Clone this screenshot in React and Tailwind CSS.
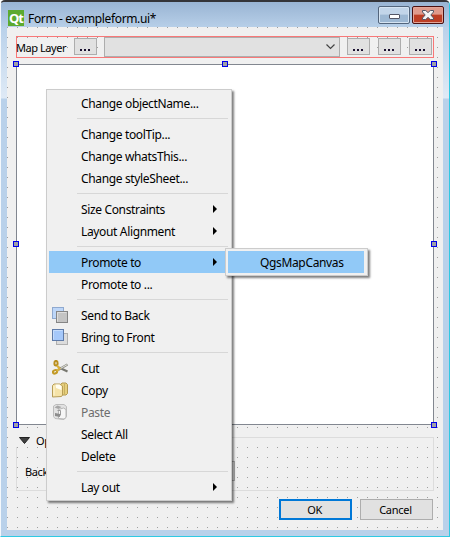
import React from "react";

function Txt({ children, ls = "tracking-[-0.35px]", className = "" }) {
  return <span className={`whitespace-pre ${ls} ${className}`}>{children}</span>;
}

function SendBackIcon() {
  return (
    <svg width="16" height="16" viewBox="0 0 16 16">
      <rect x="0.5" y="0.5" width="11" height="11" fill="#bdd6f8" stroke="#8fa9cf" />
      <rect x="4.5" y="4.5" width="11" height="11" fill="#c4c4c4" stroke="#858585" />
      <path d="M5.5 14.5v-9h9" fill="none" stroke="#dedede" />
    </svg>
  );
}

function BringFrontIcon() {
  return (
    <svg width="16" height="16" viewBox="0 0 16 16">
      <rect x="4.5" y="4.5" width="11" height="11" fill="#dcdcdc" stroke="#b0b0b0" />
      <rect x="0.5" y="0.5" width="11" height="11" fill="#a5c8fa" stroke="#5f7ba8" />
      <path d="M1.5 10.5v-9h9" fill="none" stroke="#c5dcfc" />
    </svg>
  );
}

function CutIcon() {
  return (
    <svg width="16" height="16" viewBox="0 0 16 16" fill="none">
      <path d="M7 7.500L15.500 11.500" stroke="#77776f" strokeWidth="2.200" />
      <path d="M6 10L15.500 4.500" stroke="#8f8f87" strokeWidth="2.400" />
      <path d="M8 8.700L15 4.700" stroke="#e0e0d8" strokeWidth="1" />
      <ellipse cx="4" cy="3.200" rx="1.600" ry="2.300" stroke="#b98e1d" strokeWidth="2" />
      <ellipse cx="3" cy="11.800" rx="2.200" ry="1.600" stroke="#c29a26" strokeWidth="2" transform="rotate(-25 3 11.800)" />
      <path d="M5 5.500L7.500 8.500L5 11" stroke="#d9b13b" strokeWidth="2" />
    </svg>
  );
}

function CopyIcon() {
  return (
    <svg width="16" height="16" viewBox="0 0 16 16">
      <path d="M8.500 2.500L10 1h4l1.500 1.500v9L14 13H8.500z" fill="#e6cf7d" stroke="#b39a51" />
      <path d="M12.500 2v10" stroke="#c9b060" />
      <path d="M0.500 3.500L2 2h6l2.500 2v9l-1 1.500-9 .5z" fill="#f5e3a8" stroke="#b79d57" />
      <path d="M3.500 2.500h4l2 2v3.500L4 6z" fill="#fffdf2" />
      <path d="M2 4v9.500" stroke="#fff7d6" />
    </svg>
  );
}

function PasteIcon() {
  return (
    <svg width="16" height="16" viewBox="0 0 16 16">
      <path d="M1.500 2L4 .5h8l2.500 2v10L12 15.500l-9-1-1.500-2z" fill="#e2e2e2" stroke="#bcbcbc" />
      <path d="M2.500 3.500l3-2 4 1.500-3 2z" fill="#a6a6a6" />
      <path d="M6.500 5.500l5-1.500 2.500 1.500v8l-2 1.500-5.500-.5z" fill="#f6f6f6" stroke="#b6b6b6" />
      <path d="M3 9l5 1v3L3 12z" fill="#8c8c8c" />
      <path d="M5.500 6.500h3v5" fill="none" stroke="#9a9a9a" />
    </svg>
  );
}

function Item({ label, icon, arrow, active, disabled }) {
  return (
    <div className={`flex h-[22px] items-center ${active ? "bg-[#91c9f7]" : ""}`}>
      <div className="flex w-8 shrink-0 pl-[3px]">{icon}</div>
      <Txt className={`grow pt-[2px] leading-[22px] ${disabled ? "text-[#6d6d6d]" : ""}`}>{label}</Txt>
      {arrow && (
        <svg className="mr-3 mb-px shrink-0" width="4" height="8" viewBox="0 0 4 8">
          <path d="M0 0L4 4L0 8z" fill="#000" />
        </svg>
      )}
    </div>
  );
}

function Sep() {
  return <div className="mr-px ml-7 h-[9px] pt-1"><div className="h-px bg-[#d7d7d7]" /></div>;
}

function ToolButton({ className = "" }) {
  return (
    <div className={`flex h-[17px] w-[23px] shrink-0 items-center justify-center gap-[2px] border border-[#adadad] bg-[#e1e1e1] pt-[7px] pr-px ${className}`}>
      <i className="h-[2px] w-[2px] bg-[#1a1030]" />
      <i className="h-[2px] w-[2px] bg-[#1a1030]" />
      <i className="h-[2px] w-[2px] bg-[#1a1030]" />
    </div>
  );
}

function Handle({ className }) {
  return <div className={`absolute size-[6px] border border-[#0000e8] bg-[#a0a0a4] ${className}`} />;
}

export default function App() {
  return (
    <div className="relative flex h-[537px] w-[450px] flex-col overflow-hidden rounded-t-[5px] border-t-2 border-r border-b border-l border-t-[#343438] border-r-[#2fc9e2] border-b-[#2fc9e2] border-l-[#f4f8fc] bg-[#b9d1ea] font-['Noto_Sans','Open_Sans',sans-serif] text-[12px] text-black">
      <div className="flex h-[25px] shrink-0 items-start bg-linear-to-b from-[#99b4d3] to-[#b7cfe8] pl-[7px]">
        <div className="mt-2 flex size-4 shrink-0 items-center justify-center bg-[#5caa2f] font-['Open_Sans','Noto_Sans',sans-serif] text-[13px] leading-4 font-bold tracking-[-1px] text-white">Qt</div>
        <Txt className="ml-1 pt-2 leading-[18px]">Form - exampleform.ui*</Txt>
        <div className="mt-1 ml-auto flex h-[18px] w-8 items-center justify-center rounded-[2px] border border-[#53657c] bg-linear-to-b from-[#c2d5e9] from-45% to-[#9db8d3] to-50% shadow-[inset_0_0_0_1px_#d6e4f2]">
          <div className="mt-[3px] h-[5px] w-[11px] rounded-[1px] border border-[#535666] bg-white" />
        </div>
        <div className="mt-1 mr-[5px] ml-[2px] flex h-[18px] w-8 items-center justify-center rounded-[2px] border border-[#4c1010] bg-linear-to-b from-[#df9a8c] from-45% to-[#bd3e25] to-50% shadow-[inset_0_0_0_1px_#e3a598]">
          <svg width="12" height="10" viewBox="0 0 12 10">
            <path d="M.5.5h3.200L6 2.600 8.300.5h3.200v1.500L8.800 5l2.700 3v1.500H8.300L6 7.400 3.700 9.500H.5V8l2.700-3L.5 2z" fill="#f4f4f4" stroke="#535666" />
          </svg>
        </div>
      </div>

      <div className="flex shrink-0 bg-[linear-gradient(#b9d1ea,#dfeaf6_71px,#b9d1ea_72px)] pr-[6px] pl-[6px]">
        <div className="flex h-[503px] w-[436px] flex-col bg-[#f0f0f0] bg-[radial-gradient(circle_at_0.5px_0.5px,#a0a0a0_0.7px,transparent_0.71px)] bg-size-[10px_10px] pt-[9px] pr-[9px] pl-[9px]">
          <div className="flex h-[22px] shrink-0 items-start border border-[#f87878]">
            <Txt ls="tracking-[-0.45px]" className="-ml-px w-[58px] pt-px text-[11px] leading-5">Map Layer</Txt>
            <ToolButton className="mt-px" />
            <div className="ml-[7px] flex h-5 w-[236px] items-center justify-end border border-[#adadad] bg-[#e1e1e1] pr-1">
              <svg width="9" height="6" viewBox="0 0 9 6"><path d="M.5.5l4 4 4-4" fill="none" stroke="#444" strokeWidth="1.200" /></svg>
            </div>
            <ToolButton className="mt-px ml-[7px]" />
            <ToolButton className="mt-px ml-2" />
            <ToolButton className="mt-px ml-2" />
          </div>

          <div className="relative mt-[6px] h-[361px] shrink-0 border border-[#828790] bg-white">
            <Handle className="-top-1 -left-1" />
            <Handle className="-top-1 left-[205px]" />
            <Handle className="-top-1 -right-1" />
            <Handle className="top-[176px] -left-1" />
            <Handle className="top-[176px] -right-1" />
            <Handle className="-bottom-1 -left-1" />
            <Handle className="-bottom-1 left-[205px]" />
            <Handle className="-bottom-1 -right-1" />
          </div>

          <div className="mt-3 h-[54px] shrink-0 border border-[#dcdcdc]">
            <div className="-mt-1 -ml-px flex h-[13px] w-[90px] items-center bg-[#f0f0f0] pl-[3px]">
              <svg width="11" height="7" viewBox="0 0 11 7"><path d="M.5.5h10l-5 6z" fill="#404040" stroke="#222" /></svg>
              <Txt ls="tracking-[-0.45px]" className="ml-[6px] text-[11px] leading-[13px]">Options</Txt>
            </div>
            <div className="mt-[14px] flex h-5 w-[218px] items-center justify-between pl-2">
              <Txt ls="tracking-[-0.35px]" className="pt-px text-[11px] leading-5">Background color</Txt>
              <div className="h-5 w-20 border border-[#adadad] bg-[#e1e1e1]" />
            </div>
          </div>

          <div className="mt-2 mr-px flex justify-end gap-2">
            <div className="flex h-[21px] w-[73px] items-center justify-center border-2 border-[#0078d7] bg-[#e1e1e1] pr-[2px]"><Txt ls="tracking-[-0.5px]" className="pt-px text-[11px]">OK</Txt></div>
            <div className="flex h-[21px] w-[73px] items-center justify-center border border-[#adadad] bg-[#e1e1e1] pr-[2px]"><Txt ls="tracking-[-0.25px]" className="pt-px text-[11px]">Cancel</Txt></div>
          </div>
        </div>
      </div>

      <div className="absolute top-[87px] left-[45px] h-[412px] w-[186px] border border-[#ccc] bg-[#f0f0f0] p-[2px] shadow-[2px_2px_2px_#00000080]">
        <Item label="Change objectName..." />
        <Sep />
        <Item label="Change toolTip..." />
        <Item label="Change whatsThis..." />
        <Item label="Change styleSheet..." />
        <Sep />
        <Item label="Size Constraints" arrow />
        <Item label="Layout Alignment" arrow />
        <Sep />
        <Item label="Promote to" arrow active />
        <Item label="Promote to ..." />
        <Sep />
        <Item label="Send to Back" icon={<SendBackIcon />} />
        <Item label="Bring to Front" icon={<BringFrontIcon />} />
        <Sep />
        <Item label="Cut" icon={<CutIcon />} />
        <Item label="Copy" icon={<CopyIcon />} />
        <Item label="Paste" icon={<PasteIcon />} disabled />
        <Item label="Select All" />
        <Item label="Delete" />
        <Sep />
        <Item label="Lay out" arrow />
      </div>

      <div className="absolute top-[246px] left-[224px] h-7 w-[143px] border border-[#ccc] bg-[#f0f0f0] py-[2px] pr-[3px] pl-[2px] shadow-[2px_2px_2px_#00000080]">
        <Item label="QgsMapCanvas" active />
      </div>
    </div>
  );
}
